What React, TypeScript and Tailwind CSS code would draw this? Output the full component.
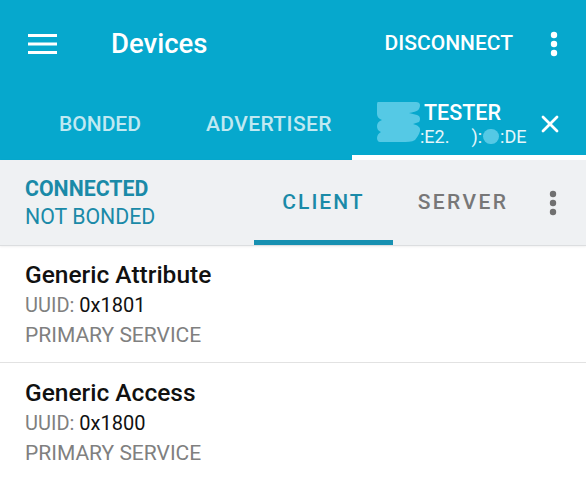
import { X } from "lucide-react";

const services = [
  { name: "Generic Attribute", uuid: "0x1801" },
  { name: "Generic Access", uuid: "0x1800" },
];

function Dots({ className }: { className: string }) {
  return (
    <svg viewBox="0 0 8 26" className={className}>
      <circle cx="4" cy="4" r="3.2" />
      <circle cx="4" cy="13" r="3.2" />
      <circle cx="4" cy="22" r="3.2" />
    </svg>
  );
}

export default function App() {
  return (
    <div
      className="w-[586px] h-[480px] overflow-hidden bg-white"
      style={{ fontFamily: "Roboto, 'Noto Sans', sans-serif" }}
    >
      {/* App bar */}
      <div className="bg-[#06a8cd] text-white">
        <div className="flex items-center h-[88px]">
          <div className="pl-[28px] w-[111px]">
            <svg viewBox="0 0 29 20" className="w-[29px] h-[20px] fill-white">
              <rect x="0" y="0" width="29" height="3" />
              <rect x="0" y="8.5" width="29" height="3" />
              <rect x="0" y="17" width="29" height="3" />
            </svg>
          </div>
          <span className="text-[27.5px] font-medium flex-1">Devices</span>
          <span className="text-[21px] font-medium">DISCONNECT</span>
          <div className="w-[73px] flex justify-center pl-[8px]">
            <Dots className="w-[8px] h-[26px] fill-white" />
          </div>
        </div>

        {/* Device tabs */}
        <div className="flex h-[72px]">
          <div className="w-[176px] pl-[59px] pt-[2px] flex items-center text-[21px] font-medium text-white/75">
            BONDED
          </div>
          <div className="w-[176px] pl-[30px] pt-[2px] flex items-center text-[21px] font-medium tracking-[0.4px] text-white/75">
            ADVERTISER
          </div>
          <div className="flex-1 flex items-center border-b-[5px] border-white pt-[5px] relative">
            <div className="absolute left-[24px] top-[12px] w-[46px] h-[46px]">
              <svg viewBox="0 0 46 46" className="w-full h-full fill-[#55c9e5]">
                <path d="M2 2h38c4 0 5 3 3 7-2 3-6 3-10 4l8 2c3 1 4 4 2 7l-6 2c4 1 8 3 7 7-1 4-3 6-5 9-3 2-8 2-14 2H4c-2 0-3-2-3-4 0-3 2-5 4-6-3-1-4-3-4-6 0-3 2-5 5-6-3-1-5-3-5-6V6c0-2 0-4 1-4z" />
              </svg>
            </div>
            <div className="pl-[72px] flex flex-col leading-none">
              <span className="text-[21.5px] font-medium">TESTER</span>
              <span className="text-[18px] text-white/90 mt-[5px] flex -ml-[4px]">
                :E2.
                <span className="ml-[22px]">):</span>
                <span className="w-[16px] h-[15px] rounded-full bg-[#55c9e5] mx-[1px] mt-[1px]" />
                :DE
              </span>
            </div>
            <X className="ml-auto mr-[22px] w-[28px] h-[28px]" strokeWidth={2.4} />
          </div>
        </div>
      </div>

      {/* Connection panel */}
      <div className="flex h-[86px] bg-[#eff1f3] border-b border-[#dcdee0] shadow-[0_1px_2px_rgba(0,0,0,0.06)]">
        <div className="w-[254px] pl-[25px] flex flex-col justify-center text-[#1a8aa8] text-[21.3px] leading-[28px] pt-[1px]">
          <span className="font-bold">CONNECTED</span>
          <span>NOT BONDED</span>
        </div>
        <div className="w-[139px] flex items-center justify-center border-b-[5px] border-[#1790b1] pt-[6px] text-[21px] font-medium tracking-[2px] text-[#1a8aa8]">
          CLIENT
        </div>
        <div className="w-[140px] flex items-center justify-center pt-[1px] text-[21px] font-medium tracking-[2.4px] text-[#777]">
          SERVER
        </div>
        <div className="flex-1 flex items-center justify-center pr-[14px]">
          <Dots className="w-[8px] h-[26px] fill-[#707070]" />
        </div>
      </div>

      {/* Services */}
      {services.map((s, i) => (
        <div
          key={s.uuid}
          className={`pl-[25px] h-[117px] flex flex-col justify-center ${
            i === 0 ? "border-b border-[#e2e2e2]" : ""
          }`}
        >
          <div className="text-[24.5px] font-medium text-[#111] leading-[30px] pt-[2px]">{s.name}</div>
          <div className="text-[20px] leading-[30px] text-[#808080]">
            UUID: <span className="text-[#111]">{s.uuid}</span>
          </div>
          <div className="text-[21px] leading-[30px] text-[#808080]">PRIMARY SERVICE</div>
        </div>
      ))}
    </div>
  );
}
